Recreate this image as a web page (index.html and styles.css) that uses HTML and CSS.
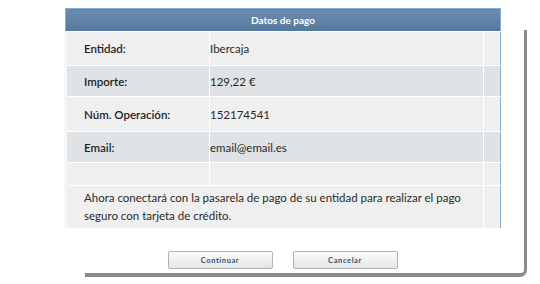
FILE: index.html
```html
<html>
<head>
<meta name="viewport" content="width=device-width, initial-scale=1" />
<title>Datos de pago</title>
<link rel="stylesheet" href="styles.css">
</head>
<body>

<div class="frame">
    <div class="frame_shadow"></div>

    <table class="pago">
        <thead>
            <tr><th colspan="3">Datos de pago</th></tr>
        </thead>
        <tbody>
            <tr class="odd"><td class="lbl">Entidad:</td><td>Ibercaja</td><td class="pad" /></tr>
            <tr class="even"><td class="lbl">Importe:</td><td>129,22 €</td><td class="pad" /></tr>
            <tr class="odd"><td class="lbl">Núm. Operación:</td><td>152174541</td><td class="pad" /></tr>
            <tr class="even"><td class="lbl">Email:</td><td>email@email.es</td><td class="pad" /></tr>
            <tr class="odd blank"><td /><td /><td class="pad" /></tr>
            <tr class="odd note"><td colspan="2">Ahora conectará con la pasarela de pago de su entidad para realizar el pago seguro con tarjeta de crédito.</td><td class="pad" /></tr>
        </tbody>
    </table>

    <div class="botones">
        <button class="btn">Continuar</button>
        <button class="btn">Cancelar</button>
    </div>
</div>

</body>
</html>
```
FILE: styles.css
```css
body { margin: 0; background-color: #fff; font-family: Lato, "Open Sans", sans-serif; }

.frame { position: relative; width: 437px; margin: 8px 0 0 64px; }
.frame_shadow { position: absolute; left: 21px; top: 22px; width: 439px; height: 243px; border-right: 3px solid #8c8c8c; border-bottom: 4px solid #8a8a8a; border-bottom-right-radius: 7px; }

.pago { position: relative; width: 437px; border: 1px solid #86aed0; border-collapse: collapse; font-size: 11.5px; color: #2a2a2a; background-color: #fff; }
.pago thead th { height: 23px; padding: 0; background: linear-gradient(#6a8db0, #55789d); color: #fff; font-size: 10px; font-weight: bold; text-align: center; border-bottom: 1px solid #fff; }
.pago td { padding: 0; border: 1px solid #fff; border-top: none; border-left: none; }
.pago td.lbl { width: 125px; padding-left: 17px; font-weight: 600; color: #1e1e1e; }
.pago td.pad { width: 16px; border-right: none; }
.pago tr.odd td { background-color: #efefef; }
.pago tr.even td { background-color: #dfe3e6; }
.pago tr td:first-child { border-left: 3px solid #f6f6f6; }
.pago tr.odd:nth-child(1) td { height: 34px; }
.pago tr.even td { height: 31px; }
.pago tr.odd:nth-child(3) td { height: 35px; }
.pago tr.blank td { height: 23px; }
.pago tr.note td { height: 43px; line-height: 18px; }
.pago tr.note td:first-child { padding: 0 0 0 17px; }

.botones { position: relative; display: flex; justify-content: center; gap: 20px; margin-top: 22px; }
.btn { width: 105px; height: 18px; padding: 0; border: 1px solid #b2b2b2; border-radius: 2px; background: linear-gradient(#fdfdfd, #e4e4e4); color: #2c5673; font-family: Lato, sans-serif; font-size: 7.5px; font-weight: bold; letter-spacing: 0.6px; }
```
